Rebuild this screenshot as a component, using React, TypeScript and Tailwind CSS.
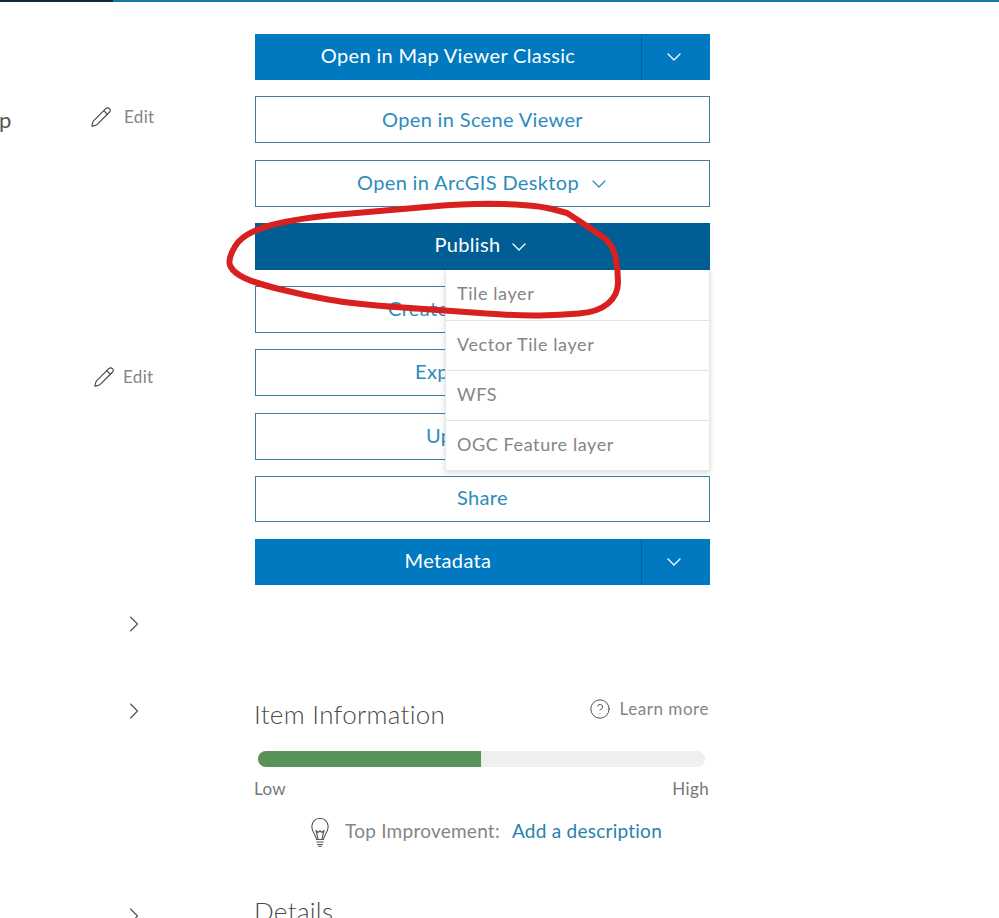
import { ChevronDown, ChevronRight, CircleHelp, Pencil } from "lucide-react";

const menuItems = ["Tile layer", "Vector Tile layer", "WFS", "OGC Feature layer"];

const scribble: [number, number][] = [
  [567, 213], [590, 228], [613, 244], [618, 270], [618, 295], [598, 312], [560, 315],
  [520, 316], [453, 311], [353, 304], [303, 295], [255, 283], [234, 273], [227, 260],
  [243, 233], [297, 218], [393, 210], [470, 203], [537, 205], [567, 213],
];

// smooth line through the midpoints, looks like a hand drawn marker
const scribblePath = () => {
  let d = `M${scribble[0][0]} ${scribble[0][1]}`;
  for (let i = 1; i < scribble.length - 1; i++) {
    const [x, y] = scribble[i];
    const [nx, ny] = scribble[i + 1];
    d += ` Q${x} ${y} ${(x + nx) / 2} ${(y + ny) / 2}`;
  }
  const last = scribble[scribble.length - 1];
  return `${d} L${last[0]} ${last[1]}`;
};

const SplitButton = ({ label, className }: { label: string; className: string }) => (
  <div className={`flex h-[46px] bg-[#0079c1] text-white ${className}`}>
    <span className="flex flex-1 items-center justify-center border-r border-[#00659f] pb-[5px]">{label}</span>
    <span className="flex w-[68px] items-center justify-center pr-[4px]">
      <ChevronDown size={24} strokeWidth={1.3} />
    </span>
  </div>
);

const OutlineButton = ({ label, className }: { label: string; className: string }) => (
  <div className={`flex h-[47px] items-center justify-center border border-[#3d7f9f] bg-white pb-[4px] text-[#2c8cbd] ${className}`}>
    {label}
  </div>
);

const EditLink = ({ className, gap }: { className: string; gap: string }) => (
  <div className={`flex items-center text-[17px] text-[#858585] ${gap} ${className}`}>
    <Pencil size={22} strokeWidth={1.2} className="text-[#444]" />
    <span>Edit</span>
  </div>
);

const BulbIcon = () => (
  <svg width="20" height="30" viewBox="0 0 20 30" fill="none" stroke="#555" strokeWidth="1.1" strokeLinecap="round" strokeLinejoin="round">
    <path d="M6.5 22.5C6.2 18.5 1.8 15.5 1.8 9.5a8.2 8.2 0 0 1 16.4 0c0 6-4.4 9-4.7 13z" />
    <path d="M6.5 22.5h7M6.8 25h6.4M7.5 27.5h5M8.5 29.2h3" />
    <path d="M8.2 22.5 6 13.5l2.2 2 1.8-2 1.8 2 2.2-2-2.2 9" />
  </svg>
);

export default function App() {
  return (
    <div className="relative h-[918px] w-[999px] overflow-hidden bg-white font-['Lato','Open_Sans',sans-serif] text-[20px] tracking-[0.35px]">
      <div className="flex h-[2px]">
        <div className="w-[113px] bg-[#0c2a44]" />
        <div className="flex-1 bg-[#1378ae]" />
      </div>

      <div className="flex">
        <aside className="w-[255px] shrink-0 text-[#555]">
          <div className="flex pt-[100px]">
            <span className="-ml-[1px] w-[91px] pt-[4px] text-[22px] leading-[28px]">p</span>
            <EditLink className="h-[30px]" gap="gap-[12px]" />
          </div>
          <EditLink className="mt-[228px] ml-[93px] h-[30px]" gap="gap-[8px]" />
          <ChevronRight size={28} strokeWidth={1} className="mt-[218px] ml-[120px]" />
          <ChevronRight size={28} strokeWidth={1} className="mt-[59px] ml-[120px]" />
          <ChevronRight size={28} strokeWidth={1} className="mt-[177px] ml-[120px]" />
        </aside>

        <main className="w-[455px]">
          <SplitButton label="Open in Map Viewer Classic" className="mt-[32px]" />
          <OutlineButton label="Open in Scene Viewer" className="mt-[16px] !pb-[2px]" />
          <div className="mt-[17px] flex h-[47px] items-center justify-center gap-[8px] border border-[#3d7f9f] pl-[3px] text-[#2c8cbd]">
            <span className="pb-[4px]">Open in ArcGIS Desktop</span>
            <ChevronDown size={24} strokeWidth={1.3} />
          </div>

          <div className="relative mt-[16px]">
            <div className="flex h-[47px] items-center justify-center gap-[6px] bg-[#005e95] text-white">
              <span className="pb-[5px]">Publish</span>
              <ChevronDown size={24} strokeWidth={1.3} />
            </div>
            {/* open dropdown */}
            <ul className="absolute top-[47px] right-0 z-10 w-[265px] border border-t-0 border-[#e6e6e6] bg-white text-[18px] tracking-[0.6px] text-[#858585] shadow-[0_2px_6px_rgba(0,0,0,0.15)]">
              {menuItems.map((item, i) => (
                <li key={item} className={`flex h-[50px] items-center px-[11px] pb-[3px] ${i > 0 ? "border-t border-[#e2e2e2]" : ""}`}>
                  {item}
                </li>
              ))}
            </ul>
          </div>

          <OutlineButton label="Create" className="mt-[16px] !justify-start pl-[132px]" />
          <OutlineButton label="Export" className="mt-[16px] !justify-start pl-[159px]" />
          <OutlineButton label="Update" className="mt-[17px] !justify-start pl-[170px]" />
          <OutlineButton label="Share" className="mt-[16px] !h-[46px]" />
          <SplitButton label="Metadata" className="mt-[17px]" />

          <div className="mt-[112px] flex items-start justify-between">
            <h2 className="-ml-[1px] text-[26px] leading-[34px] font-light tracking-[0.3px] text-[#4a4a4a]">Item Information</h2>
            <div className="mt-[-1px] mr-[1px] flex items-center gap-[9px] text-[17px] tracking-[0.55px] text-[#858585]">
              <CircleHelp size={22} strokeWidth={1} className="text-[#444]" />
              Learn more
            </div>
          </div>

          <div className="mx-[3px] mt-[20px] h-4 w-[447px] overflow-hidden rounded-full bg-[#efefef]">
            <div className="h-full w-[223px] bg-[#5a9359]" />
          </div>

          <div className="mt-[11px] -ml-[1px] mr-[1px] flex justify-between text-[17px] leading-[22px] text-[#777]">
            <span>Low</span>
            <span>High</span>
          </div>

          <div className="mt-[17px] flex items-center justify-center pl-[7px] text-[19px] tracking-[0.25px]">
            <BulbIcon />
            <span className="ml-[15px] pb-[1px] text-[#858585]">Top Improvement:</span>
            <span className="ml-[12px] pb-[1px] text-[#2a80ad]">Add a description</span>
          </div>

          <h2 className="mt-[47px] -ml-[1px] text-[26px] leading-[34px] font-light tracking-[0.3px] text-[#4a4a4a]">Details</h2>
        </main>
      </div>

      {/* red marker scribble on top of the screenshot */}
      <svg className="absolute top-0 left-0 z-20" width="999" height="918" fill="none">
        <path d={scribblePath()} stroke="#d8201f" strokeWidth="6" strokeLinecap="round" strokeLinejoin="round" />
      </svg>
    </div>
  );
}
